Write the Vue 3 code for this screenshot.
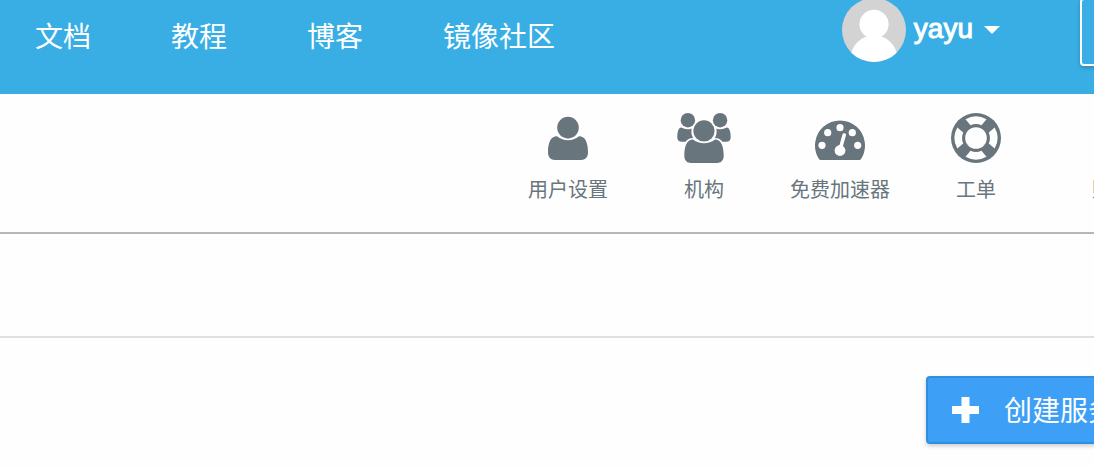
<script setup>
const navLinks = ['文档', '教程', '博客', '镜像社区']
const tools = [
  { id: 'user', label: '用户设置' },
  { id: 'group', label: '机构' },
  { id: 'speed', label: '免费加速器' },
  { id: 'ticket', label: '工单' },
  { id: 'bill', label: '账单' },
]
const gaugeDots = [[10, 33.3], [15.7, 20.7], [28, 15.7], [40.3, 20.7], [45.7, 33.3]]
const quarterTurns = [0, 90, 180, 270]
</script>

<template>
  <div class="page">
    <header class="topbar">
      <nav class="nav">
        <a v-for="link in navLinks" :key="link" href="#">{{ link }}</a>
      </nav>
      <div class="session">
        <button type="button" class="account">
          <svg class="avatar" viewBox="0 0 64 64" aria-hidden="true">
            <rect width="64" height="64" fill="#d3d3d3" />
            <circle cx="32" cy="26.3" r="14.6" fill="#fff" />
            <circle cx="32" cy="60.5" r="23.3" fill="#fff" />
          </svg>
          <span class="name">yayu</span>
          <svg class="caret" viewBox="0 0 16 8" aria-hidden="true"><path d="M0 0H16L8 8Z" fill="#fff" /></svg>
        </button>
        <button type="button" class="console" aria-label="控制台"></button>
      </div>
    </header>

    <nav class="tools">
      <a v-for="tool in tools" :key="tool.id" href="#" class="tool">
        <svg class="icon" viewBox="0 0 56 52" aria-hidden="true">
          <g v-if="tool.id === 'user'">
            <circle cx="28" cy="15.6" r="10.8" />
            <path d="M17 24.3C10.5 24.3 8 31 8 40.5C8 45 10.5 48 15 48H41C45.5 48 48 45 48 40.5C48 31 45.5 24.3 39 24.3Q34 28.2 28 28.2Q22 28.2 17 24.3Z" />
          </g>
          <g v-else-if="tool.id === 'group'">
            <circle cx="28" cy="18.9" r="10.6" />
            <path d="M17 27.5C11 27.5 8.3 34 8.3 43.5C8.3 48.3 10.8 51 15.2 51H40.8C45.2 51 47.7 48.3 47.7 43.5C47.7 34 45 27.5 39 27.5Q34 31.3 28 31.3Q22 31.3 17 27.5Z" />
            <g v-for="side in ['', 'translate(56 0) scale(-1 1)']" :key="side" :transform="side">
              <circle cx="11.9" cy="8.2" r="7.2" />
              <path d="M5.3 15.5C2.4 15.5 1.3 20 1.3 25.4C1.3 28.2 3 29.7 5.8 29.7H9.5C11.2 27.5 13.6 26.2 17.2 26C15.4 23.2 15 20 15.6 16.4Q10.5 18.6 5.3 15.5Z" />
            </g>
          </g>
          <g v-else-if="tool.id === 'speed'">
            <path d="M8.6 48Q7.6 48 7 47A25 25 0 1 1 49 47Q48.4 48 47.4 48Z" />
            <circle v-for="dot in gaugeDots" :key="dot[0]" class="hole" :cx="dot[0]" :cy="dot[1]" r="3.6" />
            <circle class="hole" cx="28" cy="38.5" r="5.4" />
            <path class="needle" d="M28.5 36L32.2 23" />
          </g>
          <g v-else-if="tool.id === 'ticket'">
            <circle cx="28" cy="26" r="25" />
            <circle class="hole" cx="28" cy="26" r="10.8" />
            <path
              v-for="turn in quarterTurns"
              :key="turn"
              class="hole"
              :transform="`rotate(${turn} 28 26)`"
              d="M17.5 7.3A21.4 21.4 0 0 1 38.5 7.3L33.5 13.2A14.1 14.1 0 0 0 22.5 13.2Z"
            />
          </g>
          <g v-else>
            <rect x="12" y="4" width="32" height="44" rx="3" />
            <rect class="hole" x="18" y="14" width="20" height="4" />
            <rect class="hole" x="18" y="24" width="20" height="4" />
          </g>
        </svg>
        <span>{{ tool.label }}</span>
      </a>
    </nav>

    <div class="subbar"></div>

    <main class="content">
      <button type="button" class="create">
        <svg class="plus" viewBox="0 0 27 26" aria-hidden="true">
          <path d="M9.5 0H17.5V9H27V17H17.5V26H9.5V17H0V9H9.5Z" fill="#fff" />
        </svg>
        <span>创建服务</span>
      </button>
    </main>
  </div>
</template>

<style>
body {
  background: #fefefe;
}
</style>

<style scoped>
.page {
  overflow: hidden;
  font-family: "Liberation Sans", "Noto Sans CJK SC", sans-serif;
}
.page * {
  box-sizing: border-box;
}
a {
  text-decoration: none;
}
button {
  font: inherit;
  cursor: pointer;
}
svg {
  display: block;
  flex: none;
}
.topbar {
  display: flex;
  justify-content: space-between;
  height: 94px;
  background: #39aee5;
}
.nav {
  display: flex;
  gap: 80px;
  padding: 18px 0 0 35px;
}
.nav a {
  color: #fff;
  font-size: 28px;
  line-height: 40px;
  white-space: nowrap;
}
.session {
  display: flex;
  align-items: flex-start;
  gap: 80px;
  margin: -2px -106px 0 0;
}
.account {
  display: flex;
  align-items: center;
  padding: 0;
  border: 0;
  background: none;
  color: #fff;
  font-size: 28px;
  line-height: 32px;
}
.avatar {
  width: 64px;
  height: 64px;
  border-radius: 50%;
}
.name {
  padding-bottom: 2px;
  margin: 0 11px 0 8px;
  -webkit-text-stroke: 1px #fff;
}
.caret {
  width: 16px;
  height: 8px;
}
.console {
  width: 120px;
  height: 68px;
  border: 2px solid #fff;
  border-radius: 4px;
  background: none;
  box-shadow: 0 2px 4px rgba(0, 0, 0, 0.2);
}
.tools {
  display: flex;
  justify-content: flex-end;
  height: 140px;
  padding-top: 18px;
  margin-right: -86px;
  border-bottom: 2px solid #b7b7b7;
}
.tool {
  display: flex;
  flex-direction: column;
  align-items: center;
  gap: 10px;
  width: 136px;
  color: #69757c;
  font-size: 20px;
  line-height: 32px;
  white-space: nowrap;
}
.icon {
  width: 56px;
  height: 52px;
  fill: #69757c;
}
.hole {
  fill: #fefefe;
}
.needle {
  fill: none;
  stroke: #fefefe;
  stroke-width: 3.6;
  stroke-linecap: round;
}
.subbar {
  height: 104px;
  border-bottom: 2px solid #e0e0e0;
}
.content {
  display: flex;
  justify-content: flex-end;
  padding: 38px 0 24px;
  margin-right: -50px;
}
.create {
  display: flex;
  align-items: center;
  gap: 25px;
  height: 68px;
  padding: 0 26px 0 24px;
  border: 2px solid #318fe0;
  border-radius: 4px;
  background: #3d9ff5;
  box-shadow: 0 2px 4px rgba(0, 0, 0, 0.2);
  color: #fff;
  font-size: 28px;
  line-height: 40px;
  white-space: nowrap;
}
.create span {
  padding-top: 4px;
}
.plus {
  width: 27px;
  height: 26px;
}
</style>
